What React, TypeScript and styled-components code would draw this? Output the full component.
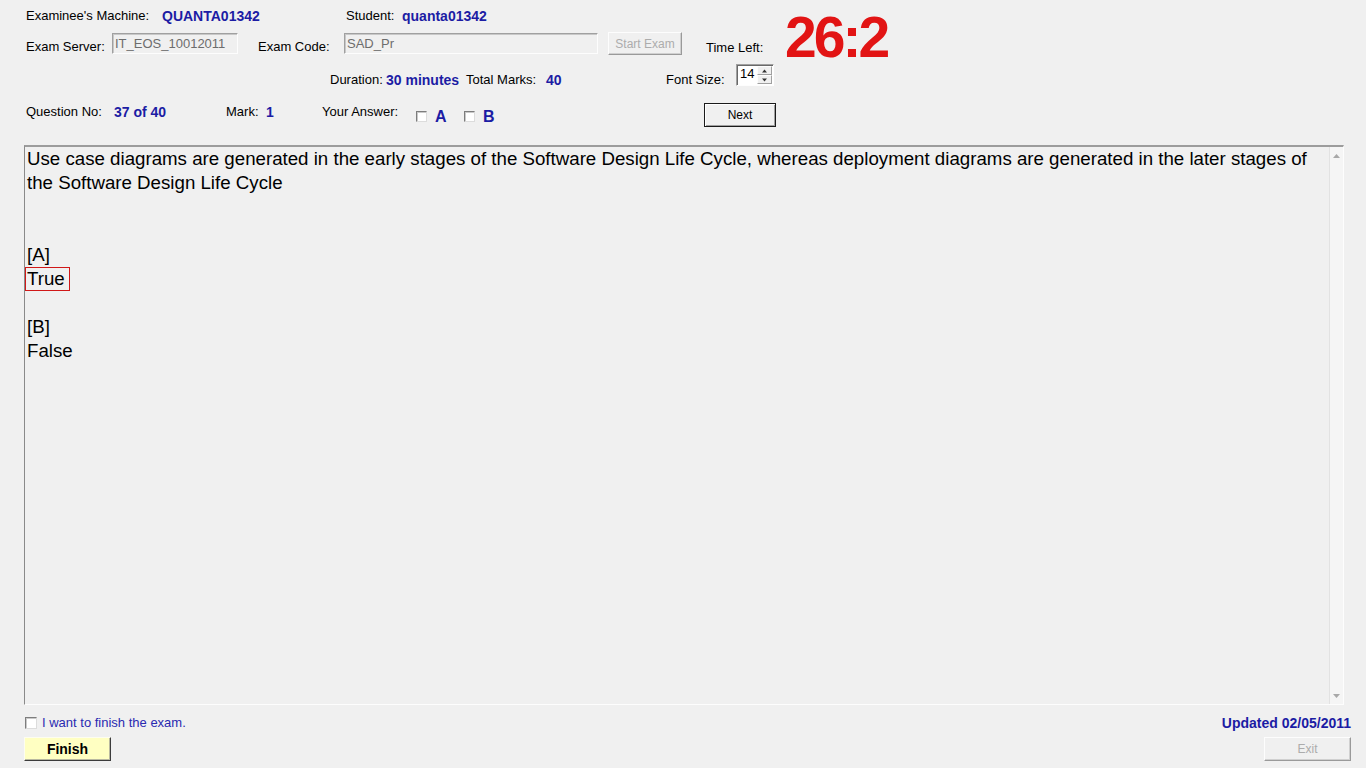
import React from "react";
import styled, { createGlobalStyle } from "styled-components";

const GlobalStyle = createGlobalStyle`
  html, body { margin: 0; padding: 0; background: #f0f0f0; }
  body {
    font-family: "Liberation Sans", Arial, sans-serif;
    color: #000;
    width: 1366px;
    height: 768px;
    overflow: hidden;
  }
`;

const Page = styled.div`
  width: 1366px;
  height: 768px;
  box-sizing: border-box;
  padding: 8px 15px 0 24px;
  display: flex;
  flex-direction: column;
`;

const Header = styled.div`
  display: flex;
  align-items: flex-start;
  padding-left: 2px;
`;

const Fields = styled.div`
  width: 750px;
  display: flex;
  flex-direction: column;
`;

const Row = styled.div<{ $h: number; $mt?: number }>`
  display: flex;
  align-items: flex-start;
  height: ${(p) => p.$h}px;
  margin-top: ${(p) => p.$mt ?? 0}px;
`;

const Label = styled.span<{ $w?: number; $top?: number }>`
  flex: none;
  font-size: 13px;
  line-height: 16px;
  white-space: nowrap;
  width: ${(p) => (p.$w ? `${p.$w}px` : "auto")};
  margin-top: ${(p) => p.$top ?? 0}px;
`;

const Value = styled(Label)`
  font-size: 14px;
  font-weight: bold;
  color: #1c1ca4;
`;

const Gap = styled.span<{ $w?: number; $grow?: boolean }>`
  flex: ${(p) => (p.$grow ? "1" : "none")};
  width: ${(p) => p.$w ?? 0}px;
`;

const TextInput = styled.div<{ $w: number }>`
  flex: none;
  width: ${(p) => p.$w}px;
  height: 21px;
  margin-top: 1px;
  box-sizing: border-box;
  border: 1px solid;
  border-color: #a0a0a0 #fdfdfd #fdfdfd #a0a0a0;
  box-shadow: inset 1px 1px 0 #c8c8c8;
  background: #f0f0f0;
  color: #6d6d6d;
  font-size: 13px;
  line-height: 16px;
  padding: 2px 0 0 2px;
  white-space: nowrap;
  overflow: hidden;
`;

type Tone = "normal" | "disabled" | "default" | "finish";

const WinButton = styled.button<{ $w: number; $h: number; $tone: Tone }>`
  flex: none;
  width: ${(p) => p.$w}px;
  height: ${(p) => p.$h}px;
  box-sizing: border-box;
  padding: 0;
  margin: 0;
  font-family: "Liberation Sans", Arial, sans-serif;
  font-size: ${(p) => (p.$tone === "finish" ? "14px" : "12px")};
  font-weight: ${(p) => (p.$tone === "finish" ? "bold" : "normal")};
  color: ${(p) => (p.$tone === "disabled" ? "#acacac" : "#000")};
  background: ${(p) => (p.$tone === "finish" ? "#ffffc2" : "#f0f0f0")};
  border: 1px solid;
  border-color: ${(p) =>
    p.$tone === "default"
      ? "#1a1a1a"
      : p.$tone === "finish"
      ? "#fdfdf0 #3c3c3c #3c3c3c #fdfdf0"
      : "#fdfdfd #9a9a9a #9a9a9a #fdfdfd"};
  box-shadow: ${(p) =>
    p.$tone === "default"
      ? "inset 1px 1px 0 #fff, inset -1px -1px 0 #a0a0a0"
      : p.$tone === "finish"
      ? "inset -1px -1px 0 #b8b8a0"
      : "inset -1px -1px 0 #d0d0d0"};
  cursor: default;
`;

const TimeLabel = styled(Label)`
  margin-left: 24px;
`;

const Check = styled.span<{ $size: number; $top?: number; $left?: number }>`
  flex: none;
  width: ${(p) => p.$size}px;
  height: ${(p) => p.$size}px;
  margin-top: ${(p) => p.$top ?? 0}px;
  margin-left: ${(p) => p.$left ?? 0}px;
  box-sizing: border-box;
  background: #fff;
  border: 1px solid;
  border-color: #7d7d7d #dcdcdc #dcdcdc #7d7d7d;
  box-shadow: inset 1px 1px 0 #c9c9c9;
`;

const Letter = styled.span<{ $w: number }>`
  flex: none;
  width: ${(p) => p.$w}px;
  margin-top: 5px;
  font-size: 16px;
  line-height: 18px;
  font-weight: bold;
  color: #1c1ca4;
`;

const Spinner = styled.div`
  flex: none;
  width: 38px;
  height: 22px;
  box-sizing: border-box;
  display: flex;
  background: #fff;
  border: 1px solid;
  border-color: #a0a0a0 #fdfdfd #fdfdfd #a0a0a0;
  box-shadow: inset 1px 1px 0 #696969;
`;

const SpinText = styled.span`
  flex: 1;
  font-size: 13px;
  line-height: 16px;
  padding: 1px 0 0 3px;
`;

const SpinButtons = styled.div`
  width: 16px;
  display: flex;
  flex-direction: column;
  padding: 1px 1px 1px 0;
  box-sizing: border-box;
`;

const SpinBtn = styled.div`
  flex: 1;
  display: flex;
  align-items: center;
  justify-content: center;
  background: #f0f0f0;
  border: 1px solid;
  border-color: #fdfdfd #a0a0a0 #a0a0a0 #fdfdfd;
`;

const Timer = styled.div`
  flex: none;
  margin: 1px 0 0 9px;
  font-size: 57px;
  line-height: 57px;
  font-weight: bold;
  letter-spacing: -3px;
  color: #e21414;
`;

const Panel = styled.div`
  margin-top: 18px;
  width: 1320px;
  height: 560px;
  box-sizing: border-box;
  display: flex;
  border-top: 2px solid #9c9c9c;
  border-left: 1px solid #8a8a8a;
  border-right: 1px solid #fdfdfd;
  border-bottom: 1px solid #fdfdfd;
`;

const Content = styled.div`
  flex: 1;
  padding-left: 2px;
  font-size: 18.7px;
  line-height: 24px;
  color: #000;
`;

const Question = styled.p`
  margin: 0 0 48px;
`;

const Option = styled.div`
  margin: 0 0 24px;
`;

const Choice = styled.span<{ $selected?: boolean }>`
  display: inline-block;
  margin-left: -2px;
  padding: 0 4px 0 1px;
  border: 1px solid ${(p) => (p.$selected ? "#d01818" : "transparent")};
  line-height: 22px;
`;

const ScrollBar = styled.div`
  flex: none;
  width: 13px;
  display: flex;
  flex-direction: column;
  justify-content: space-between;
  align-items: center;
  padding: 7px 0 6px;
  background: #f5f5f5;
  border-left: 1px solid #e2e2e2;
`;

const FinishRow = styled.div`
  margin-top: 11px;
  height: 13px;
  display: flex;
  align-items: center;
`;

const FinishText = styled.span`
  margin-left: 5px;
  font-size: 13px;
  line-height: 16px;
  color: #2a2ab0;
`;

const Updated = styled.span`
  margin-left: auto;
  font-size: 14px;
  line-height: 16px;
  font-weight: bold;
  color: #1c1ca4;
`;

const ButtonRow = styled.div`
  margin-top: 8px;
  display: flex;
  justify-content: space-between;
`;

const Arrow = ({ up, color = "#a8a8a8", w = 7 }: { up: boolean; color?: string; w?: number }) => (
  <svg width={w} height={4} viewBox="0 0 7 4">
    {up ? <path d="M3.5 0 L7 4 L0 4 Z" fill={color} /> : <path d="M0 0 L7 0 L3.5 4 Z" fill={color} />}
  </svg>
);

export default function App() {
  return (
    <>
      <GlobalStyle />
      <Page>
        <Header>
          <Fields>
            <Row $h={16}>
              <Label $w={136}>Examinee's Machine:</Label>
              <Value $w={184}>QUANTA01342</Value>
              <Label $w={56}>Student:</Label>
              <Value>quanta01342</Value>
            </Row>
            <Row $h={24} $mt={8}>
              <Label $w={86} $top={7}>Exam Server:</Label>
              <TextInput $w={126}>IT_EOS_10012011</TextInput>
              <Gap $w={20} />
              <Label $w={86} $top={7}>Exam Code:</Label>
              <TextInput $w={254}>SAD_Pr</TextInput>
              <Gap $w={10} />
              <WinButton $w={74} $h={23} $tone="disabled">Start Exam</WinButton>
              <TimeLabel $top={8}>Time Left:</TimeLabel>
            </Row>
            <Row $h={24} $mt={8}>
              <Gap $w={304} />
              <Label $w={56} $top={8}>Duration:</Label>
              <Value $w={80} $top={8}>30 minutes</Value>
              <Label $w={80} $top={8}>Total Marks:</Label>
              <Value $w={120} $top={8}>40</Value>
              <Label $w={70} $top={8}>Font Size:</Label>
              <Spinner>
                <SpinText>14</SpinText>
                <SpinButtons>
                  <SpinBtn>
                    <Arrow up w={5} color="#333" />
                  </SpinBtn>
                  <SpinBtn>
                    <Arrow up={false} w={5} color="#333" />
                  </SpinBtn>
                </SpinButtons>
              </Spinner>
            </Row>
            <Row $h={24} $mt={15}>
              <Label $w={88} $top={1}>Question No:</Label>
              <Value $w={112} $top={1}>37 of 40</Value>
              <Label $w={40} $top={1}>Mark:</Label>
              <Value $w={56} $top={1}>1</Value>
              <Label $w={94} $top={1}>Your Answer:</Label>
              <Check $size={11} $top={8} />
              <Gap $w={8} />
              <Letter $w={29}>A</Letter>
              <Check $size={11} $top={8} />
              <Gap $w={8} />
              <Letter $w={20}>B</Letter>
              <Gap $grow />
              <WinButton $w={72} $h={24} $tone="default">Next</WinButton>
            </Row>
          </Fields>
          <Timer>26:2</Timer>
        </Header>

        <Panel>
          <Content>
            <Question>
              Use case diagrams are generated in the early stages of the Software Design Life Cycle, whereas
              deployment diagrams are generated in the later stages of the Software Design Life Cycle
            </Question>
            <Option>
              <div>[A]</div>
              <Choice $selected>True</Choice>
            </Option>
            <Option>
              <div>[B]</div>
              <Choice>False</Choice>
            </Option>
          </Content>
          <ScrollBar>
            <Arrow up />
            <Arrow up={false} />
          </ScrollBar>
        </Panel>

        <FinishRow>
          <Check $size={12} $left={1} />
          <FinishText>I want to finish the exam.</FinishText>
          <Updated>Updated 02/05/2011</Updated>
        </FinishRow>
        <ButtonRow>
          <WinButton $w={87} $h={24} $tone="finish">Finish</WinButton>
          <WinButton $w={87} $h={24} $tone="disabled">Exit</WinButton>
        </ButtonRow>
      </Page>
    </>
  );
}
